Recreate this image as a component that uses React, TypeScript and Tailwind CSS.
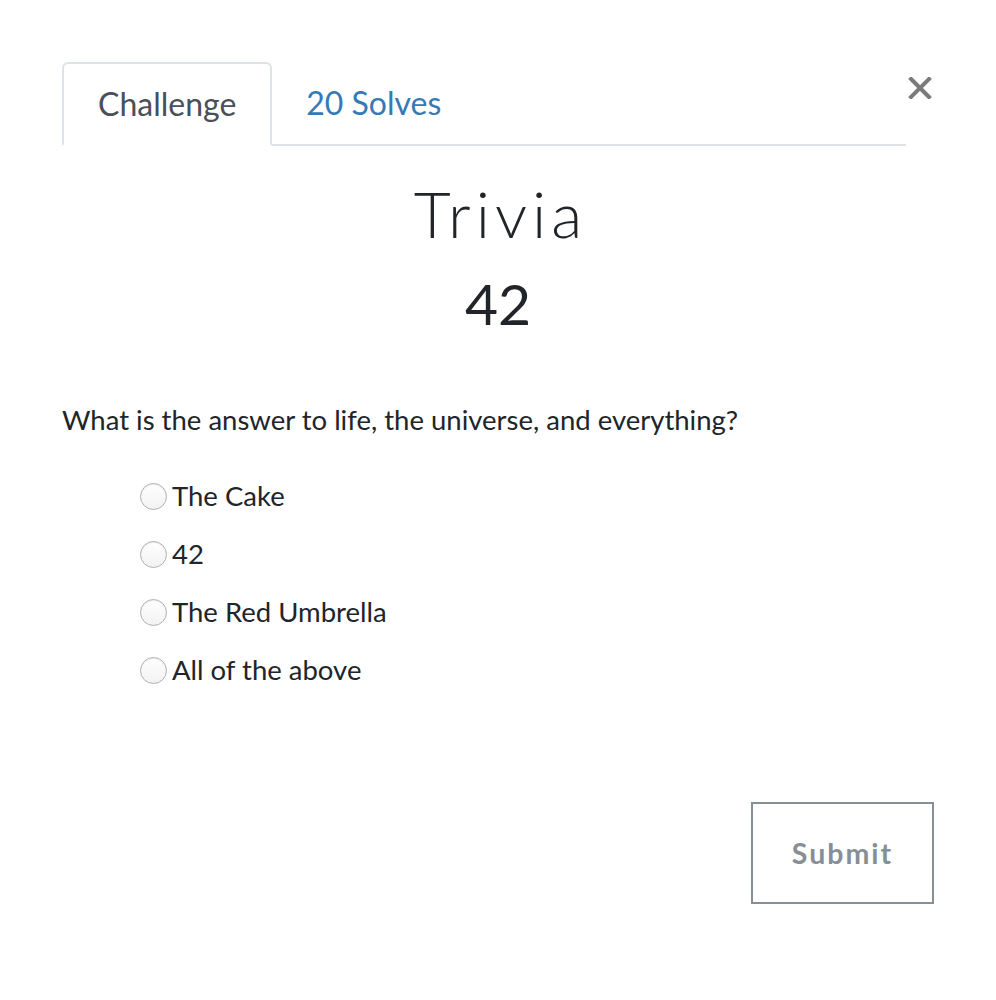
import React from "react";

const options = ["The Cake", "42", "The Red Umbrella", "All of the above"];

export default function App() {
  return (
    <div
      className="relative w-[996px] h-[1000px] bg-white text-[#212529]"
      style={{ fontFamily: "Lato, 'Open Sans', sans-serif" }}
    >
      <button className="absolute left-[908px] top-[77px] w-[24px] h-[22px] flex items-center justify-center">
        <svg width="24" height="22" viewBox="0 0 24 22">
          <path d="M3 2 L21 20 M21 2 L3 20" stroke="#7b7b7b" strokeWidth="4" strokeLinecap="square" />
        </svg>
      </button>
      <div className="pt-[62px] px-[62px]">
        <div className="flex w-[844px] border-b-2 border-[#dee2e6]">
          <div className="-mb-[2px] h-[84px] px-[34px] flex items-center border-2 border-[#dee2e6] border-b-white rounded-t-[6px] bg-white text-[32px] text-[#495057]">
            Challenge
          </div>
          <div className="h-[82px] px-[34px] flex items-center text-[32px] text-[#337ab7]">
            20 Solves
          </div>
        </div>
        <div className="flex flex-col items-center">
          <h1 className="mt-[28px] text-[64px] leading-[80px] font-light tracking-[5px] pl-[5px] text-[#212529]">
            Trivia
          </h1>
          <h2 className="mt-[14px] text-[57px] leading-[70px] font-normal text-[#212529]">
            42
          </h2>
        </div>
        <p className="mt-[64px] text-[27.5px] leading-[36px]">
          What is the answer to life, the universe, and everything?
        </p>
        <div className="mt-[40px] pl-[78px] flex flex-col gap-[22px]">
          {options.map((o) => (
            <label key={o} className="flex items-center h-[36px] text-[27.5px]">
              <span className="w-[27px] h-[27px] rounded-full border border-[#b0b0b0] bg-gradient-to-b from-white to-[#f2f2f2] shadow-[inset_0_1px_1px_rgba(0,0,0,0.08)] mr-[5px]" />
              {o}
            </label>
          ))}
        </div>
      </div>
      <button className="absolute left-[751px] top-[802px] w-[183px] h-[102px] border-2 border-[#868e96] text-[#868e96] text-[28.5px] font-bold tracking-[2px] flex items-center justify-center">
        Submit
      </button>
    </div>
  );
}
